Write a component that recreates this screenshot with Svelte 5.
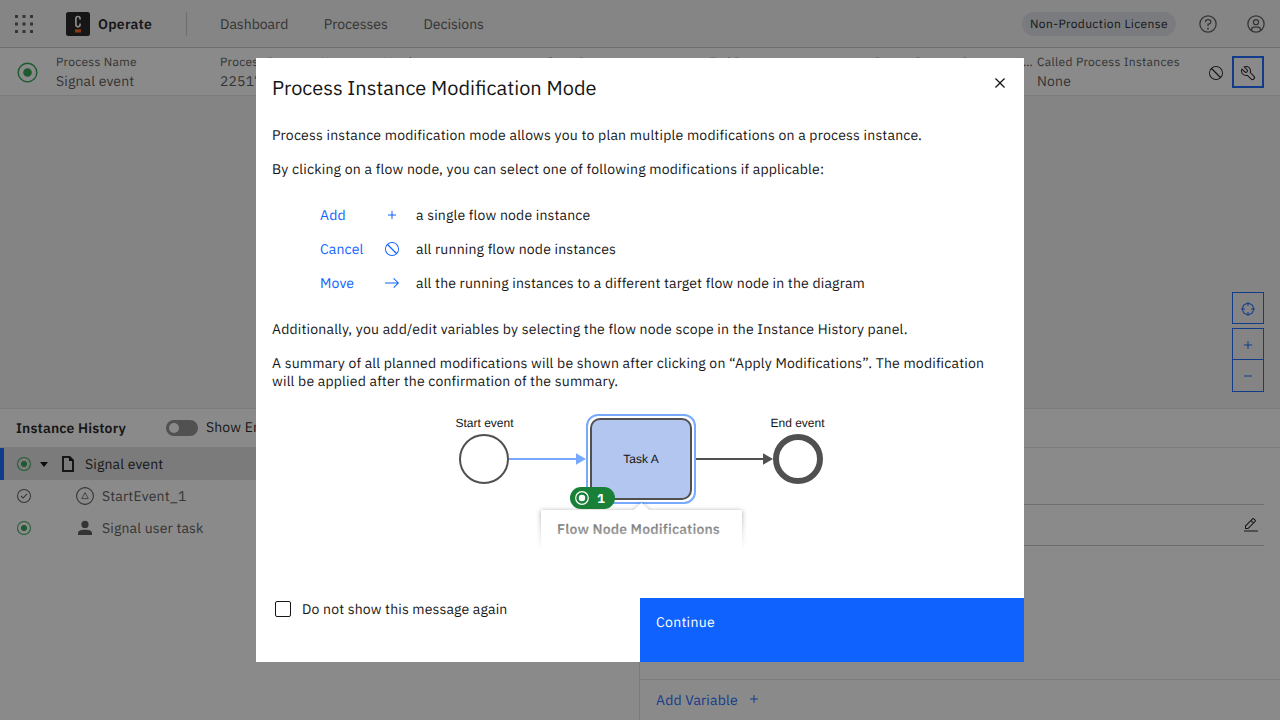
<script>
  const nav = ['Dashboard', 'Processes', 'Decisions'];
  const details = [
    ['Process Name', 'Signal event'],
    ['Process Instance Key', '225179'],
    ['Version', ''],
    ['Start Date', ''],
    ['End Date', ''],
    ['Parent Process Instance Key', ''],
    ['Called Process Instances', 'None']
  ];
  const modifications = [
    { label: 'Add', icon: 'add', text: 'a single flow node instance' },
    { label: 'Cancel', icon: 'error', text: 'all running flow node instances' },
    { label: 'Move', icon: 'arrow', text: 'all the running instances to a different target flow node in the diagram' }
  ];
  const paths = {
    add: 'M17 15V8h-2v7H8v2h7v7h2v-7h7v-2z',
    subtract: 'M8 15h16v2H8z',
    close: 'M17.4141 16 24 9.4141 22.5859 8 16 14.5859 9.4143 8 8 9.4141 14.5859 16 8 22.5859 9.4143 24 16 17.4141 22.5859 24 24 22.5859z',
    error: 'M16 2a14 14 0 1 0 14 14A14 14 0 0 0 16 2zm0 2a12 12 0 0 1 9.27 19.63L8.37 6.73A11.94 11.94 0 0 1 16 4zm0 24A12 12 0 0 1 6.73 8.37l16.9 16.9A11.94 11.94 0 0 1 16 28z',
    arrow: 'M18.6 7.4 26.2 15H2v2h24.2l-7.6 7.6L20 26l10-10L20 6z',
    help: 'M16 2a14 14 0 1 0 14 14A14 14 0 0 0 16 2zm0 26a12 12 0 1 1 12-12 12 12 0 0 1-12 12zM16 22a1.5 1.5 0 1 0 0 3 1.5 1.5 0 0 0 0-3zM17 8h-1.5a4.49 4.49 0 0 0-4.5 4.5v.5h2v-.5a2.5 2.5 0 0 1 2.5-2.5H17a2.5 2.5 0 0 1 0 5h-2v4.5h2V17a4.5 4.5 0 0 0 0-9z',
    user: 'M16 8a5 5 0 1 0 5 5 5 5 0 0 0-5-5zm0 8a3 3 0 1 1 3-3 3 3 0 0 1-3 3zM16 2a14 14 0 1 0 14 14A14 14 0 0 0 16 2zm-6 24.38V25a3 3 0 0 1 3-3h6a3 3 0 0 1 3 3v1.38a11.9 11.9 0 0 1-12 0zm13.99-1.45A5 5 0 0 0 19 20h-6a5 5 0 0 0-4.99 4.93 12 12 0 1 1 15.98 0z',
    tools: 'M12.1 2a9.8 9.8 0 0 0-5.4 1.6l6.4 6.4a2.1 2.1 0 0 1 .2 3 2.1 2.1 0 0 1-3-.2L3.7 6.4A9.84 9.84 0 0 0 2 12.1a10.14 10.14 0 0 0 10.1 10.1 10.9 10.9 0 0 0 2.6-.3l6.7 6.7a5 5 0 0 0 7.1-7.1l-6.7-6.7a10.9 10.9 0 0 0 .3-2.6A10 10 0 0 0 12.1 2zM20 12.1a7.61 7.61 0 0 1-.3 2.1l-.3 1.1.8.8 6.7 6.7a2.88 2.88 0 0 1 .9 2.1 2.72 2.72 0 0 1-.9 2.1 2.9 2.9 0 0 1-4.2 0L16 20.3l-.8-.8-1.1.3a7.61 7.61 0 0 1-2.1.3 8.27 8.27 0 0 1-5.7-2.3A7.63 7.63 0 0 1 4 12.1a8.33 8.33 0 0 1 .3-2.2l4.4 4.4a4.14 4.14 0 0 0 5.9.2 4.14 4.14 0 0 0-.2-5.9L10 4.2a6.45 6.45 0 0 1 2-.3 8.27 8.27 0 0 1 5.7 2.3 8.49 8.49 0 0 1 2.3 5.9z',
    edit: 'M2 27h28v2H2zM25.4 9c.8-.8.8-2 0-2.8l-3.6-3.6c-.8-.8-2-.8-2.8 0l-15 15V24h6.4zm-5-5L24 7.6l-3 3L17.4 7zM6 22v-3.6l10-10 3.6 3.6-10 10z',
    center: 'M30 15h-2.05A12.01 12.01 0 0 0 17 4.05V2h-2v2.05A12.01 12.01 0 0 0 4.05 15H2v2h2.05A12.01 12.01 0 0 0 15 27.95V30h2v-2.05A12.01 12.01 0 0 0 27.95 17H30zM17 25.95V22h-2v3.95A10.02 10.02 0 0 1 6.05 17H10v-2H6.05A10.02 10.02 0 0 1 15 6.05V10h2V6.05A10.02 10.02 0 0 1 25.95 15H22v2h3.95A10.02 10.02 0 0 1 17 25.95z',
    active: 'M16 2a14 14 0 1 0 14 14A14 14 0 0 0 16 2zm0 26a12 12 0 1 1 12-12 12 12 0 0 1-12 12zM16 10a6 6 0 1 0 6 6 6 6 0 0 0-6-6z',
    done: 'M16 2a14 14 0 1 0 14 14A14 14 0 0 0 16 2zm0 26a12 12 0 1 1 12-12 12 12 0 0 1-12 12zM14 21.41l-5-5L10.41 15 14 18.59 21.59 11 23 12.41z'
  };
</script>

{#snippet icon(name, size = 16)}
  <svg class="icon" width={size} height={size} viewBox="0 0 32 32"><path d={paths[name]} /></svg>
{/snippet}

<div class="page">
  <header class="top">
    <svg class="switcher" width="20" height="20" viewBox="0 0 20 20">
      {#each [1, 8.5, 16] as y}{#each [1, 8.5, 16] as x}<rect {x} {y} width="3" height="3" />{/each}{/each}
    </svg>
    <svg class="logo" width="24" height="24" viewBox="0 0 24 24">
      <rect width="24" height="24" rx="2.5" fill="#161616" />
      <path d="M14.1 7.6V6.7c0-1.5-.7-2.2-2.1-2.2s-2.1.7-2.1 2.2v5.900c0 1.500.7 2.200 2.100 2.200s2.100-.7 2.100-2.200v-1" fill="none" stroke="#fff" stroke-width="1.7" />
      <rect x="9" y="17.3" width="6" height="3.2" fill="#fc5d0d" />
    </svg>
    <b class="brand">Operate</b>
    <i class="rule"></i>
    <nav>{#each nav as item}<span>{item}</span>{/each}</nav>
    <span class="license">Non-Production License</span>
    <span class="top-icon">{@render icon('help', 20)}</span>
    <span class="top-icon user">{@render icon('user', 20)}</span>
  </header>

  <section class="instance">
    <span class="state green">{@render icon('active', 23)}</span>
    <div class="details">
      {#each details as [name, value]}
        <div class="detail"><small>{name}</small><span>{value}</span></div>
      {/each}
    </div>
    <span class="action low">{@render icon('error')}</span>
    <span class="action low focused">{@render icon('tools')}</span>
  </section>

  <section class="diagram">
    <div class="zoom">
      <span class="reset low">{@render icon('center')}</span>
      <span class="low">{@render icon('add')}</span>
      <span>{@render icon('subtract')}</span>
    </div>
  </section>

  <section class="panels">
    <div class="history">
      <div class="panel-head"><b>Instance History</b><i class="toggle"></i><span>Show End Date</span></div>
      <div class="row selected">
        <span class="green status">{@render icon('active')}</span>
        <svg class="caret" width="8" height="5" viewBox="0 0 8 5"><path d="M0 0h8L4 5z" /></svg>
        <svg class="doc" width="12" height="16" viewBox="0 0 12 16"><path d="M1 1h6.700L11 4.300V15H1z" fill="none" stroke="#161616" stroke-width="2" /><path d="M7 1v4h4z" /></svg>
        <span>Signal event</span>
      </div>
      <div class="row child">
        <span class="status">{@render icon('done')}</span>
        <svg class="node signal" width="18" height="18" viewBox="0 0 18 18"><circle cx="9" cy="9" r="8.400" stroke-width="1.100" /><path d="M9 5.600 12.300 11.600H5.700z" stroke-width=".8" /></svg>
        <span>StartEvent_1</span>
      </div>
      <div class="row child">
        <span class="green status">{@render icon('active')}</span>
        <svg class="node" width="18" height="18" viewBox="0 0 18 18"><circle cx="9" cy="5.400" r="3.600" /><path d="M2 16v-1.600C2 11.800 4.500 10.800 9 10.800s7 1 7 3.600V16z" /></svg>
        <span>Signal user task</span>
      </div>
    </div>
    <div class="variables">
      <div class="panel-head"></div>
      <div class="variable-list"><div class="variable">{@render icon('edit')}</div></div>
      <div class="add-variable"><span>Add Variable</span>{@render icon('add')}</div>
    </div>
  </section>
</div>

<div class="overlay">
  <div class="modal" role="dialog" aria-modal="true">
    <div class="modal-head"><h1>Process Instance Modification Mode</h1>{@render icon('close', 20)}</div>
    <div class="modal-body">
      <p>Process instance modification mode allows you to plan multiple modifications on a process instance.</p>
      <p>By clicking on a flow node, you can select one of following modifications if applicable:</p>
      <ul>
        {#each modifications as item}
          <li><span>{item.label}</span>{@render icon(item.icon)}<em>{item.text}</em></li>
        {/each}
      </ul>
      <p class="tight">Additionally, you add/edit variables by selecting the flow node scope in the Instance History panel.</p>
      <p class="tight">A summary of all planned modifications will be shown after clicking on “Apply Modifications”. The modification will be applied after the confirmation of the summary.</p>
      <svg class="preview" width="400" height="160" viewBox="440 400 400 160">
        <defs>
          <linearGradient id="text-fade" gradientUnits="userSpaceOnUse" x1="0" y1="521" x2="0" y2="537"><stop offset="0" stop-color="#6f6f6f" /><stop offset="1" stop-color="#acacac" /></linearGradient>
          <linearGradient id="fade" x1="0" y1="0" x2="0" y2="1"><stop offset="0" stop-color="#fff" stop-opacity="0" /><stop offset="1" stop-color="#fff" /></linearGradient>
          <filter id="shadow" x="-10%" y="-30%" width="120%" height="160%"><feDropShadow dx="0" dy="1" stdDeviation="2.500" flood-color="#000" flood-opacity=".38" /></filter>
        </defs>
        <g class="bpmn">
          <text x="484.500" y="427">Start event</text>
          <text x="797.500" y="427">End event</text>
          <circle cx="484" cy="459" r="24" fill="#fff" stroke="#505050" stroke-width="2" />
          <circle cx="798" cy="459" r="22" fill="#fff" stroke="#505050" stroke-width="6" />
          <path d="M509 459h68" stroke="#77a9ff" stroke-width="2" />
          <path d="M576 453.300 586 459l-10 5.700z" fill="#77a9ff" />
          <path d="M696 459h68" stroke="#505050" stroke-width="2" />
          <path d="M763 453.300 773 459l-10 5.700z" fill="#505050" />
          <rect x="587" y="415" width="108" height="88" rx="11" fill="#fff" stroke="#77a9ff" stroke-width="2" />
          <rect x="591" y="419" width="100" height="80" rx="9" fill="#b3c6f0" stroke="#505050" stroke-width="2" />
          <text x="641" y="463">Task A</text>
        </g>
        <path d="M541 510h93l7.500-7 7.500 7h93v42H541z" fill="#fff" filter="url(#shadow)" />
        <rect x="570" y="487" width="45" height="22" rx="11" fill="#198038" />
        <circle cx="582" cy="498" r="6.300" fill="none" stroke="#fff" stroke-width="1.200" />
        <circle cx="582" cy="498" r="3.200" fill="#fff" />
        <text class="count" x="597" y="503">1</text>
        <rect x="530" y="512" width="224" height="38" fill="url(#fade)" />
        <rect x="530" y="550" width="224" height="10" fill="#fff" />
        <text class="popup" x="557" y="534">Flow Node Modifications</text>
      </svg>
    </div>
    <div class="modal-foot">
      <label><i class="box"></i>Do not show this message again</label>
      <button>Continue</button>
    </div>
  </div>
</div>

<style>
  :global(body) { overflow: hidden; }
  .page, .overlay { width: 1280px; height: 720px; box-sizing: border-box; font: 14px/18px "IBM Plex Sans", Roboto, sans-serif; letter-spacing: 0.16px; color: #161616; text-rendering: geometricPrecision; }
  .page *, .overlay * { box-sizing: border-box; }
  .page { display: flex; flex-direction: column; background: #fff; }
  svg { display: block; flex: none; }
  .icon { fill: currentColor; }
  b { font-weight: 600; }
  .green { color: #24a148; }

  .top { height: 48px; flex: none; display: flex; align-items: center; padding-left: 14px; background: #f4f4f4; border-bottom: 1px solid #c6c6c6; color: #525252; }
  .logo { margin-left: 32px; }
  .brand { width: 96px; padding-left: 8px; color: #161616; letter-spacing: 0.24px; }
  .switcher { fill: #525252; }
  .rule { width: 1px; height: 24px; background: #c6c6c6; }
  nav { display: flex; gap: 35.6px; padding-left: 33px; letter-spacing: 0; }
  .license { margin-left: auto; height: 24px; padding: 0 8px; border-radius: 12px; background: #dde1e6; color: #121619; font-size: 12px; line-height: 25px; letter-spacing: 0.4px; }
  .top-icon { padding-left: 22px; }
  .top-icon.user { padding: 0 14px 0 28px; }

  .instance { height: 48px; flex: none; display: flex; align-items: center; padding: 0 16px; border-bottom: 1px solid #e0e0e0; }
  .state { width: 40px; padding-top: 1px; }
  .details { flex: 1; display: grid; grid-template-columns: 164px 164px 163px 162px 164px 164px 1fr; color: #525252; }
  .detail { display: flex; flex-direction: column; white-space: nowrap; min-width: 0; padding-right: 3px; }
  .detail small { height: 18px; font-size: 12px; line-height: 18px; letter-spacing: 0.32px; overflow: hidden; text-overflow: ellipsis; }
  .detail:nth-child(6) { width: 160px; margin-left: 1px; padding: 0; }
  .action { width: 32px; height: 32px; display: grid; place-items: center; }
  .action.focused { border: 2px solid #0f62fe; }

  .diagram { height: 312px; flex: none; background: #f2f2f2; display: flex; justify-content: flex-end; padding: 196px 16px 0 0; }
  .zoom { width: 32px; color: #0f62fe; }
  .zoom span { height: 32px; display: grid; place-items: center; border: 1px solid #0f62fe; }
  .low { padding-top: 2px; }
  .zoom .reset { margin-bottom: 4px; }
  .zoom span:last-child { margin-top: -1px; height: 33px; }

  .panels { flex: 1; display: grid; grid-template-columns: 640px 640px; border-top: 1px solid #e0e0e0; }
  .panel-head { height: 39px; display: flex; align-items: center; padding-left: 16px; border-bottom: 1px solid #e0e0e0; }
  .panel-head span { margin-top: -2px; }
  .history { border-right: 1px solid #e0e0e0; }
  .toggle { width: 32px; height: 16px; margin: 0 8px 0 40px; border-radius: 8px; background: #8d8d8d; padding: 3px; }
  .toggle::before { content: ''; display: block; width: 10px; height: 10px; border-radius: 5px; background: #fff; }
  .row { height: 32px; display: flex; align-items: center; padding-left: 16px; color: #525252; }
  .row.selected { padding-left: 12px; border-left: 4px solid #0f62fe; background: #e0e0e0; color: #161616; }
  .caret { margin-left: 8px; }
  .doc { margin: 0 11px 0 14px; }
  .node { margin: 0 8px 0 44px; fill: #525252; }
  .node.signal { fill: none; stroke: #525252; }
  .variables { display: flex; flex-direction: column; }
  .variable-list { flex: 1; padding: 56px 16px 0; }
  .variable { height: 42px; display: flex; align-items: center; justify-content: flex-end; padding: 0 5px 0 0; border: solid #c6c6c6; border-width: 1px 0; }
  .add-variable { height: 41px; display: flex; align-items: center; gap: 8px; padding-left: 16px; border-top: 1px solid #e0e0e0; color: #0f62fe; }
  .add-variable :global(svg) { margin-top: -2px; }

  .overlay { position: fixed; inset: 0; display: grid; place-items: center; background: rgba(22, 22, 22, 0.5); }
  .modal { width: 768px; height: 604px; display: flex; flex-direction: column; background: #fff; }
  .modal-head { display: flex; justify-content: space-between; padding: 16px 14px 0 16px; }
  h1 { margin: 0; font-size: 20px; line-height: 28px; font-weight: 400; letter-spacing: 0; }
  .modal-head :global(svg) { margin-top: -1px; }
  .modal-body { flex: 1; padding: 24px 16px 0; display: flex; flex-direction: column; }
  p { margin: 0 0 16px; padding-right: 20px; letter-spacing: 0.21px; }
  p.tight { letter-spacing: 0.195px; }
  ul { list-style: none; margin: 12px 0 28px 48px; padding: 0; display: grid; gap: 16px; }
  li { display: grid; grid-template-columns: 64px 16px 1fr; align-items: center; color: #0f62fe; }
  em { font-style: normal; color: #161616; padding-left: 16px; letter-spacing: 0.18px; }
  .preview { align-self: center; margin-top: -6px; letter-spacing: 0; }
  .bpmn text { font: 12px "Liberation Sans", Arial, sans-serif; text-anchor: middle; fill: #161616; }
  .count { font-size: 13px; font-weight: 700; fill: #fff; }
  .popup { font-size: 14px; font-weight: 600; fill: url(#text-fade); letter-spacing: 0.14px; }
  .modal-foot { height: 64px; flex: none; display: grid; grid-template-columns: 1fr 1fr; }
  label { display: flex; align-items: flex-start; padding: 2px 0 0 19px; }
  .box { width: 16px; height: 16px; margin: 1px 11px 0 0; border: 1px solid #161616; border-radius: 2px; }
  button { border: 0; padding: 15px 16px; display: flex; align-items: flex-start; background: #0f62fe; color: #fff; font: inherit; letter-spacing: 0.3px; text-rendering: inherit; }
</style>
